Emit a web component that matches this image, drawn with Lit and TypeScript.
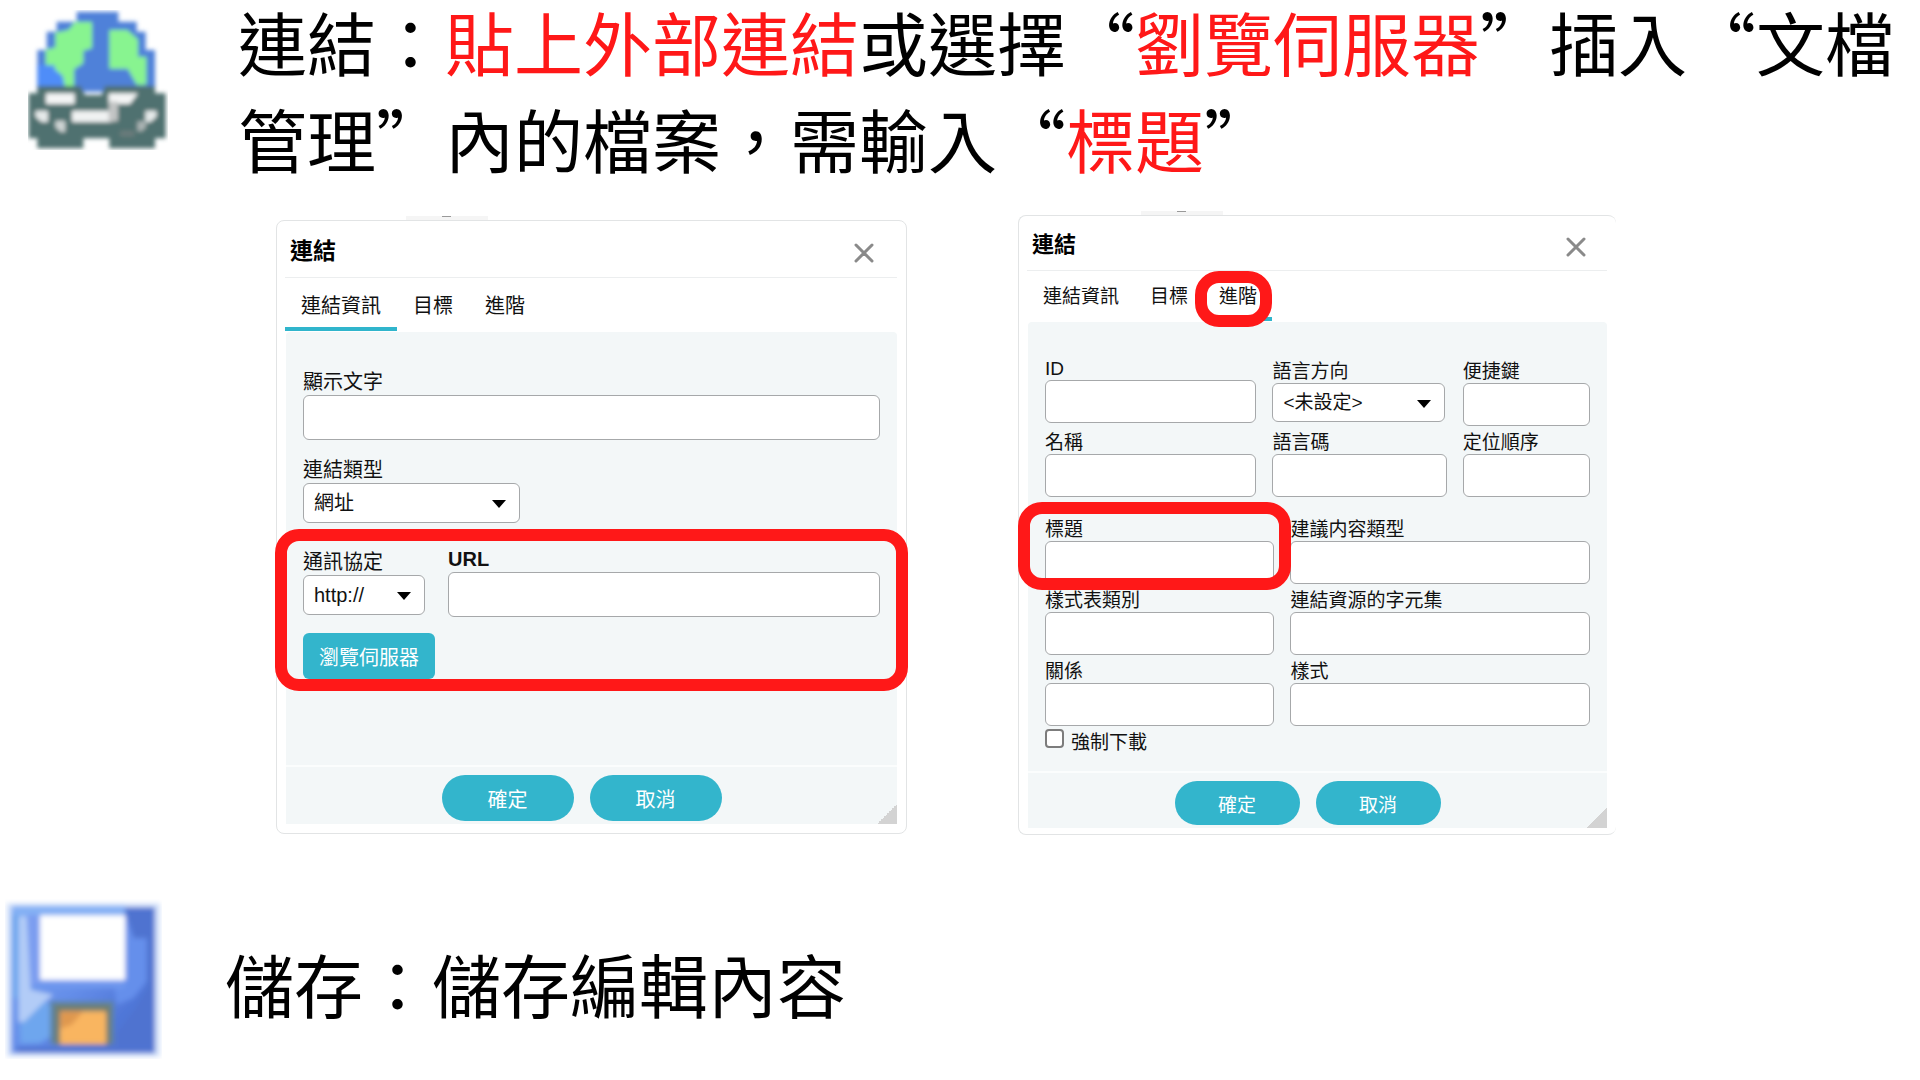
import { LitElement, html, css, svg, nothing } from "lit";
import { customElement, property } from "lit/decorators.js";

const controlStyles = css`
  * {
    box-sizing: border-box;
  }
  .field {
    display: flex;
    flex-direction: column;
    position: relative;
    min-width: 0;
  }
  .low {
    padding-top: 3px;
  }
  .label {
    line-height: var(--label-line);
    white-space: nowrap;
  }
  .strong {
    font-weight: 700;
  }
  .text {
    width: 100%;
    height: var(--input-height);
    margin: 0;
    padding: 0 10px;
    border: 1px solid #a6a8aa;
    border-radius: 6px;
    background: #fff;
    font: inherit;
    color: inherit;
  }
  .picker {
    position: relative;
    display: flex;
  }
  .picker::after {
    content: "";
    position: absolute;
    right: 14px;
    top: 50%;
    margin-top: -3px;
    border: 7px solid transparent;
    border-top: 8px solid #000;
    border-bottom: 0;
    pointer-events: none;
  }
  .select {
    appearance: none;
    width: 100%;
    height: var(--select-height);
    margin: 0;
    padding: 0 10px;
    border: 1px solid #a6a8aa;
    border-radius: 6px;
    background: #fff;
    font: inherit;
    color: inherit;
  }
  .mark {
    position: absolute;
    z-index: 1;
    border: 12px solid #ff1818;
    border-radius: 24px;
    pointer-events: none;
  }
`;

@customElement("dialog-frame")
export class DialogFrame extends LitElement {
  @property({ type: Number }) active = 0;
  @property({ type: Boolean }) marked = false;

  static styles = [
    controlStyles,
    css`
      :host {
        display: block;
        position: relative;
        border: 1px solid #e2e4e5;
        border-radius: 8px;
        padding: 0 9px var(--frame-bottom) 8px;
        background: #fff;
        font-family: "Liberation Sans", "Noto Sans CJK TC", sans-serif;
        font-size: var(--text-size);
        color: #111;
      }
      .behind {
        position: absolute;
        left: var(--behind-left);
        top: -5px;
        width: 82px;
        height: 4px;
        background: #f5f5f5;
      }
      .behind::after {
        content: "";
        position: absolute;
        left: 36px;
        top: 0;
        width: 9px;
        height: 1px;
        background: #999;
      }
      .header {
        display: flex;
        align-items: center;
        justify-content: space-between;
        height: var(--header-height);
        padding: 4px var(--close-inset) 0 5px;
        border-bottom: 1px solid #eceeef;
      }
      .title {
        margin: 0;
        font-size: var(--title-size);
        line-height: 32px;
        font-weight: 700;
        color: #000;
      }
      .close {
        display: flex;
        margin: 4px 0 0;
        padding: 0;
        border: 0;
        background: none;
      }
      .tabs {
        display: flex;
        height: var(--tabs-height);
      }
      .tab {
        position: relative;
        margin: 0;
        padding: var(--tab-padding);
        border: 0;
        border-bottom: 4px solid transparent;
        background: none;
        font: inherit;
        color: inherit;
        white-space: nowrap;
      }
      .current {
        border-bottom-color: #30b5cc;
      }
      .around-tab {
        inset: 0 0 -10px -8px;
      }
      .panel {
        position: relative;
        margin: 1px 0 0 1px;
        border-radius: 4px 4px 0 0;
        background: #f3f7f8;
      }
      .footer {
        display: flex;
        justify-content: center;
        gap: 16px;
        padding: var(--footer-top) 0 3px;
        margin-right: 20px;
      }
      .edge {
        border-top: 2px solid #fbfdfd;
      }
      .action {
        width: var(--action-width);
        height: var(--action-height);
        padding: 0;
        border: 0;
        border-radius: 24px;
        background: #33b5cc;
        color: #fff;
        font: inherit;
      }
      .grip {
        position: absolute;
        right: 0;
        bottom: 0;
        width: 20px;
        height: 20px;
        background: linear-gradient(135deg, transparent 50%, #d3d3d3 50%);
      }
    `,
  ];

  render() {
    return html`
      <div class="behind"></div>
      <header class="header">
        <h2 class="title">連結</h2>
        <button class="close" aria-label="關閉">
          <svg width="20" height="20" viewBox="0 0 20 20" fill="none" stroke="#8a8a8a" stroke-width="3" stroke-linecap="round">
            <path d="M2 2 18 18M18 2 2 18" />
          </svg>
        </button>
      </header>
      <nav class="tabs">
        ${["連結資訊", "目標", "進階"].map(
          (name, i) => html`<button class="tab ${i === this.active ? "current" : ""}">
            ${name}${this.marked && i === this.active ? html`<span class="mark around-tab"></span>` : nothing}
          </button>`
        )}
      </nav>
      <div class="panel">
        <slot></slot>
        <div class="edge">
          <div class="footer">
            <button class="action">確定</button>
            <button class="action">取消</button>
          </div>
        </div>
        <div class="grip"></div>
      </div>
    `;
  }
}

@customElement("link-info-form")
export class LinkInfoForm extends LitElement {
  static styles = [
    controlStyles,
    css`
      :host {
        display: block;
        padding: 37px 17px 86px;
      }
      .type {
        width: 217px;
        margin: 17px 0 23px;
      }
      .group {
        position: relative;
      }
      .row {
        display: grid;
        grid-template-columns: 122px 1fr;
        gap: 23px;
      }
      .browse {
        height: 46px;
        width: 132px;
        margin-top: 16px;
        padding: 0;
        border: 0;
        border-radius: 6px;
        background: #33b5cc;
        color: #fff;
        font: inherit;
      }
      .around-group {
        inset: -17px -28px -12px;
      }
    `,
  ];

  render() {
    return html`
      <div class="field">
        <label class="label" for="caption">顯示文字</label>
        <input class="text" id="caption" />
      </div>
      <div class="field type">
        <label class="label" for="type">連結類型</label>
        <span class="picker"><select class="select" id="type"><option>網址</option></select></span>
      </div>
      <div class="group">
        <div class="row">
          <div class="field low">
            <label class="label" for="protocol">通訊協定</label>
            <span class="picker"><select class="select" id="protocol"><option>http://</option></select></span>
          </div>
          <div class="field">
            <label class="label strong" for="url">URL</label>
            <input class="text" id="url" />
          </div>
        </div>
        <button class="browse">瀏覽伺服器</button>
        <div class="mark around-group"></div>
      </div>
    `;
  }
}

@customElement("link-advanced-form")
export class LinkAdvancedForm extends LitElement {
  static styles = [
    controlStyles,
    css`
      :host {
        display: block;
        padding: 35px 17px 17px;
      }
      .triple,
      .double {
        display: grid;
        gap: 5px 16px;
      }
      .triple {
        grid-template-columns: 211fr 174fr 127fr;
      }
      .double {
        grid-template-columns: 229fr 299fr;
        margin-top: 21px;
      }
      .around-field {
        inset: -16px -17px -6px -27px;
      }
      .check {
        display: flex;
        gap: 7px;
        padding-top: 3px;
      }
      .download {
        padding-top: 2px;
      }
      .box {
        appearance: none;
        width: 19px;
        height: 19px;
        margin: 0;
        border: 2px solid #7c7c7c;
        border-radius: 4px;
        background: #fff;
      }
      .narrow {
        padding-right: 2px;
      }
    `,
  ];

  private field(id: string, label: string, extra = "", marked = false) {
    return html`<div class="field ${extra}">
      <label class="label" for=${id}>${label}</label>
      <input class="text" id=${id} />
      ${marked ? html`<div class="mark around-field"></div>` : nothing}
    </div>`;
  }

  render() {
    return html`
      <div class="triple">
        ${this.field("ident", "ID")}
        <div class="field low narrow">
          <label class="label" for="direction">語言方向</label>
          <span class="picker"><select class="select" id="direction"><option>&lt;未設定&gt;</option></select></span>
        </div>
        ${this.field("shortcut", "便捷鍵", "low")}
        ${this.field("name", "名稱")}
        ${this.field("language", "語言碼")}
        ${this.field("order", "定位順序")}
      </div>
      <div class="double">
        ${this.field("heading", "標題", "", true)}
        ${this.field("content-type", "建議内容類型")}
        ${this.field("class-name", "樣式表類別")}
        ${this.field("charset", "連結資源的字元集")}
        ${this.field("relation", "關係")}
        ${this.field("style", "樣式")}
      </div>
      <div class="check">
        <input class="box" type="checkbox" id="download" />
        <label class="label download" for="download">強制下載</label>
      </div>
    `;
  }
}

const globeIcon = svg`
  <defs><filter id="soft-globe" x="-5%" y="-5%" width="110%" height="110%"><feGaussianBlur stdDeviation="7" /></filter></defs>
  <g filter="url(#soft-globe)">
    <path fill="#4f81d9" d="M230 35H355V65H410V95H437V150H465V275H112V150H140V95H170V65H230Z" />
    <path fill="#4f8df8" d="M112 195H160L200 250V270H112Z" />
    <path fill="#88f490" d="M225 66H276V145L250 152V190L222 208V258H194L188 228 164 208V196H137V150L166 142V98L205 90Z" />
    <path fill="#88f490" d="M328 90H382L414 118V170H439V254H410L383 206H328Z" />
    <path fill="#50716f" d="M112 258H242L255 285H305L315 258H465V280H497V415H465V445H328V415H250V445H112V415H86V280H112Z" />
    <path fill="#f4f5f5" d="M138 280H224V312H138ZM326 280H414L390 312H326Z" />
    <path fill="#f0f2f2" d="M216 332H336V366H216Z" />
    <path fill="#c2c4c4" d="M326 305H354V364H326Z" />
    <path fill="#e6eaea" d="M106 332H144V366H124L106 350ZM470 332H436V366H452L470 350Z" />
    <path fill="#ced4d4" d="M166 362H196V396H182L166 382Z" />
    <path fill="#aab3b3" d="M438 364H412V394H426L438 382Z" />
    <path fill="#6a7c7c" d="M360 392H404V410H360Z" />
  </g>`;

const floppyIcon = svg`
  <defs>
    <filter id="soft-disk" x="-5%" y="-5%" width="110%" height="110%"><feGaussianBlur stdDeviation="8" /></filter>
    <linearGradient id="disk" x1="0" y1="0" x2="1" y2="1">
      <stop offset="0" stop-color="#78a8f2" /><stop offset=".5" stop-color="#658ee9" />
      <stop offset=".75" stop-color="#5077d8" /><stop offset="1" stop-color="#4f70cc" />
    </linearGradient>
  </defs>
  <g filter="url(#soft-disk)">
    <path fill="#d4e2fa" d="M20 76H480V536H20Z" />
    <path fill="url(#disk)" d="M34 90H464V526H34Z" />
    <path fill="#84b0f4" d="M36 84H375V112H36Z" />
    <path fill="#5073d0" d="M375 88H464V524H345V470L400 400 440 330V180H400L375 110Z" />
    <path fill="#658feb" d="M378 112 402 182H440V310L400 360 350 380 340 310H378Z" />
    <path fill="#6ea6ee" d="M36 110H58V360H36ZM60 440 130 370 160 385V470L120 495H62Z" />
    <path fill="#b2ccf7" d="M56 115H80L92 335 160 350 124 380 72 432H56Z" />
    <path fill="#7c9df0" d="M82 112H116V320H92Z" />
    <path fill="#7098ee" d="M116 305H374V330H116Z" />
    <path fill="#fff" d="M120 112H376V306H120Z" />
    <path fill="#5d84a2" d="M150 370H342V498H150Z" />
    <path fill="#6f7f70" d="M164 380H332V500H164Z" />
    <path fill="#f9b561" d="M180 400H318V498H180Z" />
    <path fill="#df984f" d="M180 400H250L215 440 182 452Z" />
    <path fill="#5174d2" d="M50 506H460V524H50Z" />
  </g>`;

@customElement("app-root")
export class AppRoot extends LitElement {
  static styles = css`
    :host {
      display: block;
      background: #fff;
      color: #000;
      font-family: "Noto Sans CJK TC", sans-serif;
      overflow: hidden;
    }
    .intro {
      display: flex;
      align-items: flex-start;
      gap: 70px;
      padding-left: 28px;
    }
    .icon {
      flex: none;
    }
    .globe {
      margin-top: 10px;
    }
    .lead {
      margin: -7px 0 0;
      font-size: 69px;
      line-height: 97px;
      font-weight: 400;
    }
    .red {
      color: #ff1818;
    }
    .dialogs {
      display: grid;
      grid-template-columns: 631fr 598fr;
      align-items: start;
      gap: 111px;
      padding: 28px 304px 0 276px;
    }
    .info {
      margin-top: 5px;
      --behind-left: 129px;
      --frame-bottom: 9px;
      --text-size: 20px;
      --title-size: 23px;
      --header-height: 57px;
      --close-inset: 23px;
      --tabs-height: 53px;
      --tab-padding: 3px 16px 0;
      --label-line: 26px;
      --input-height: 45px;
      --select-height: 40px;
      --footer-top: 8px;
      --action-width: 132px;
      --action-height: 46px;
    }
    .advanced {
      border-right: 0;
      --behind-left: 122px;
      --frame-bottom: 6px;
      --text-size: 19px;
      --title-size: 22px;
      --header-height: 55px;
      --close-inset: 21px;
      --tabs-height: 50px;
      --tab-padding: 1px 15px 0 16px;
      --label-line: 23px;
      --input-height: 43px;
      --select-height: 39px;
      --footer-top: 8px;
      --action-width: 125px;
      --action-height: 44px;
    }
    .save {
      display: flex;
      align-items: center;
      gap: 63px;
      padding: 64px 0 0 5px;
    }
    .caption {
      margin: 8px 0 0;
      font-size: 69px;
      line-height: 97px;
    }
  `;

  render() {
    return html`
      <section class="intro">
        <svg class="icon globe" width="140" height="140" viewBox="84 30 420 420">${globeIcon}</svg>
        <p class="lead">連結：<span class="red">貼上外部連結</span>或選擇“<span class="red">劉覽伺服器</span>”插入“文檔管理”內的檔案，需輸入“<span class="red">標題</span>”</p>
      </section>
      <section class="dialogs">
        <dialog-frame class="info" .active=${0}><link-info-form></link-info-form></dialog-frame>
        <dialog-frame class="advanced" .active=${2} .marked=${true}><link-advanced-form></link-advanced-form></dialog-frame>
      </section>
      <section class="save">
        <svg class="icon" width="157" height="160" viewBox="15 63 471 480">${floppyIcon}</svg>
        <p class="caption">儲存：儲存編輯內容</p>
      </section>
    `;
  }
}
